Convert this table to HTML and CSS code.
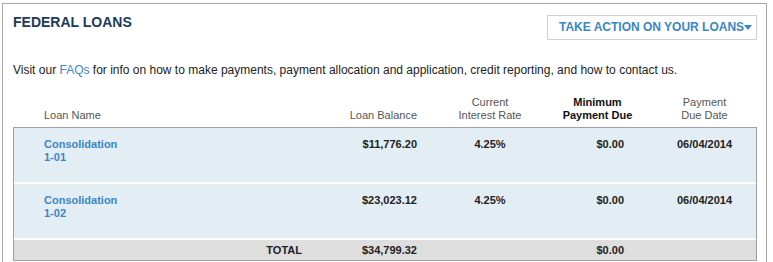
FILE: index.html
```html
<!DOCTYPE html>
<html>
<head>
<meta charset="utf-8">
<link rel="stylesheet" href="styles.css">
</head>
<body>
<div class="panel">
  <div class="head">
    <h2 class="title">FEDERAL LOANS</h2>
    <button class="action">TAKE ACTION ON YOUR LOANS<span class="caret"></span></button>
  </div>
  <p class="intro">Visit our <a class="link" href="#">FAQs</a> for info on how to make payments, payment allocation and application, credit reporting, and how to contact us.</p>
  <div class="loans">
    <div class="row hdr">
      <div class="c1">Loan Name</div>
      <div class="c2">Loan Balance</div>
      <div class="c3">Current<br>Interest Rate</div>
      <div class="c4 strong">Minimum<br>Payment Due</div>
      <div class="c5">Payment<br>Due Date</div>
    </div>
    <div class="body">
      <div class="row loan">
        <div class="c1"><a class="link" href="#">Consolidation<br>1-01</a></div>
        <div class="c2">$11,776.20</div>
        <div class="c3">4.25%</div>
        <div class="c4 val">$0.00</div>
        <div class="c5">06/04/2014</div>
      </div>
      <div class="row loan">
        <div class="c1"><a class="link" href="#">Consolidation<br>1-02</a></div>
        <div class="c2">$23,023.12</div>
        <div class="c3">4.25%</div>
        <div class="c4 val">$0.00</div>
        <div class="c5">06/04/2014</div>
      </div>
      <div class="row total">
        <div class="c1 tlabel">TOTAL</div>
        <div class="c2">$34,799.32</div>
        <div class="c3"></div>
        <div class="c4 val">$0.00</div>
        <div class="c5"></div>
      </div>
    </div>
  </div>
</div>
</body>
</html>
```
FILE: styles.css
```css
html, body {
  margin: 0;
  padding: 0;
  background: #fff;
  font-family: "Liberation Sans", Arial, Helvetica, sans-serif;
  color: #222;
}
.panel {
  margin: 3px 0 0 2px;
  width: 765px;
  box-sizing: border-box;
  border: 1px solid #a8a8a8;
  border-bottom: none;
  padding: 10px 9px 0 10px;
  height: 262px;
}
.head {
  display: flex;
  justify-content: space-between;
  align-items: flex-start;
}
.title {
  margin: 0;
  font-size: 14px;
  line-height: 17px;
  font-weight: bold;
  color: #1d3a58;
}
.action {
  margin-top: 1px;
  width: 210px;
  height: 25px;
  box-sizing: border-box;
  border: 1px solid #cfcfcf;
  background: #fff;
  color: #3a86c6;
  font-family: inherit;
  font-size: 12px;
  font-weight: bold;
  line-height: 23px;
  padding: 0 0 0 11px;
  text-align: left;
  display: flex;
  align-items: center;
}
.caret {
  display: inline-block;
  width: 0;
  height: 0;
  border-left: 4px solid transparent;
  border-right: 4px solid transparent;
  border-top: 5px solid #3a86c6;
  margin-left: 0;
}
.intro {
  margin: 23px 0 0 0;
  font-size: 12px;
  line-height: 15px;
  color: #222;
}
.link {
  color: #3a86c6;
  text-decoration: none;
}
.loans {
  margin-top: 18px;
}
.row {
  display: grid;
  grid-template-columns: 316px 102px 116px 99px 109px;
  font-size: 11px;
  line-height: 13px;
}
.hdr {
  color: #555;
  align-items: end;
  padding: 0 1px 5px 1px;
}
.hdr .c3, .hdr .c4 {
  text-align: center;
}
.hdr .c5 {
  text-align: center;
  padding-left: 6px;
}
.strong {
  font-weight: bold;
  color: #111;
}
.c1 {
  padding-left: 30px;
}
.c2 {
  text-align: right;
  padding-right: 15px;
}
.body {
  border: 1px solid #a0a0a0;
  display: flex;
  flex-direction: column;
  gap: 2px;
  background: #fff;
}
.loan {
  background: #e3eef4;
  height: 54px;
  box-sizing: border-box;
  padding-top: 10px;
  font-weight: bold;
  color: #222;
}
.loan .c3 {
  text-align: center;
}
.val {
  text-align: right;
  padding-right: 23px;
}
.loan .c5 {
  text-align: center;
  padding-left: 6px;
}
.total {
  background: #dedede;
  height: 20px;
  align-items: center;
  font-weight: bold;
  color: #222;
}
.tlabel {
  text-align: right;
  padding-right: 28px;
}
```
